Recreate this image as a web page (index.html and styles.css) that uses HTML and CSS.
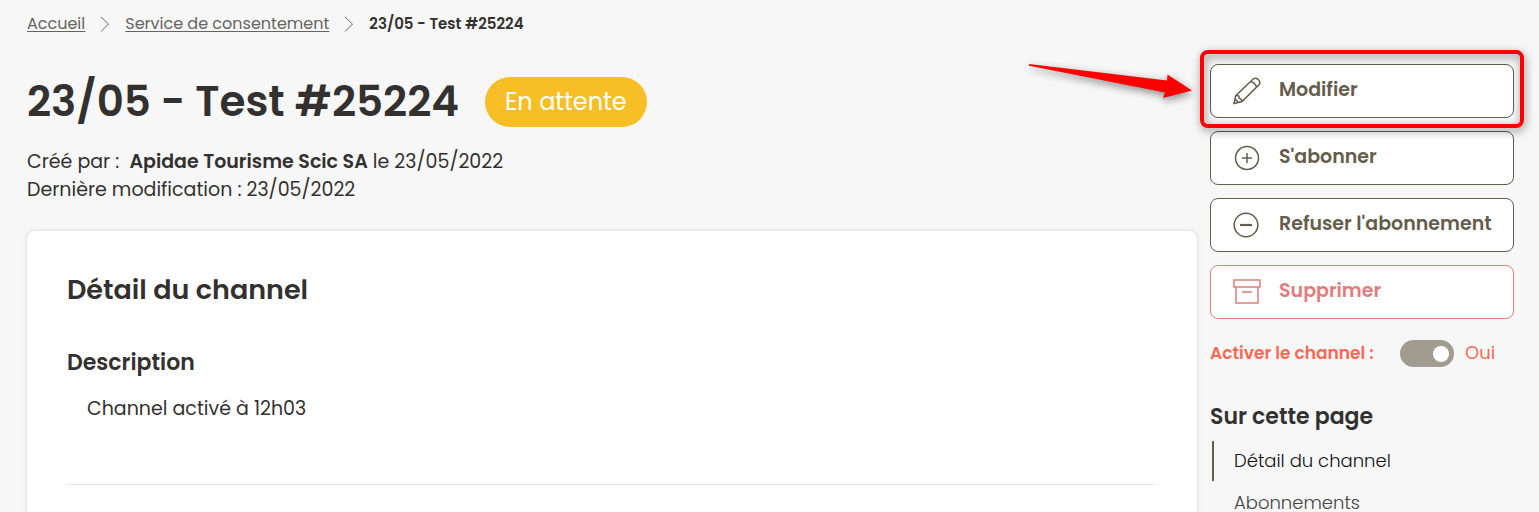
FILE: index.html
```html
<!DOCTYPE html>
<html lang="fr">
<head>
<meta charset="utf-8">
<meta name="viewport" content="width=device-width, initial-scale=1">
<title>23/05 - Test #25224</title>
<link rel="stylesheet" href="styles.css">
</head>
<body>
<div class="page">
  <main class="main">
    <nav class="breadcrumb" aria-label="Fil d'Ariane">
      <a href="#">Accueil</a>
      <svg class="chevron" viewBox="0 0 10 16" aria-hidden="true"><path d="M1 1l7.500 7L1 15.500"/></svg>
      <a href="#">Service de consentement</a>
      <svg class="chevron" viewBox="0 0 10 16" aria-hidden="true"><path d="M1 1l7.500 7L1 15.500"/></svg>
      <span class="current" aria-current="page">23/05 - Test #25224</span>
    </nav>
    <header class="heading">
      <h1 class="title">23/05 - Test #25224</h1>
      <span class="badge">En attente</span>
    </header>
    <div class="meta">
      <p>Créé par :&nbsp; <strong>Apidae Tourisme Scic SA</strong> le 23/05/2022</p>
      <p>Dernière modification : 23/05/2022</p>
    </div>
    <section class="card" id="detail">
      <h2 class="card-title">Détail du channel</h2>
      <h3 class="card-subtitle">Description</h3>
      <p class="description">Channel activé à 12h03</p>
      <hr class="rule">
    </section>
  </main>
  <aside class="side">
    <div class="actions">
      <div class="highlighted">
        <button class="action" type="button">
          <svg class="icon" viewBox="0 0 28 28" aria-hidden="true"><path d="M1 26.500l1.700-7.800L20.200 2q2.200-1.500 4.500 0 3 2.200 1.800 5.300L9 24.500zM2.700 18.700q2.300-.8 3.300.8-.3 2 1.200 2.200 1.800.5 1.800 2.800M17.700 4.500q4.700 1 5.800 5.800M2.300 22.500q1.800.8 2.700 3"/></svg>
          <span>Modifier</span>
        </button>
        <div class="frame"></div>
        <svg class="arrow" viewBox="0 0 180 60" aria-hidden="true"><path d="M9 10L147 26.500 147.500 20.500 172 36.500 143 44 145 38.500 9 11.800z"/></svg>
      </div>
      <button class="action" type="button">
        <svg class="icon" viewBox="0 0 28 28" aria-hidden="true"><circle cx="14" cy="14" r="11.500"/><path d="M14 9v10M9 14h10"/></svg>
        <span>S'abonner</span>
      </button>
      <button class="action" type="button">
        <svg class="icon" viewBox="0 0 28 28" aria-hidden="true"><circle cx="13" cy="14" r="11.800"/><path stroke-width="2.200" d="M7 14h12"/></svg>
        <span>Refuser l'abonnement</span>
      </button>
      <button class="action danger" type="button">
        <svg class="icon" viewBox="0 0 28 28" aria-hidden="true"><path d="M1 2h26v7H1zM3 9v16h22V9M9 14h10"/></svg>
        <span>Supprimer</span>
      </button>
    </div>
    <div class="activate">
      <label class="activate-label" for="enabled">Activer le channel :</label>
      <input class="switch" type="checkbox" role="switch" id="enabled" checked>
      <span>Oui</span>
    </div>
    <nav class="toc" aria-labelledby="toc-title">
      <h2 class="toc-title" id="toc-title">Sur cette page</h2>
      <a class="toc-link active" href="#detail">Détail du channel</a>
      <a class="toc-link" href="#abonnements">Abonnements</a>
    </nav>
  </aside>
</div>
</body>
</html>
```
FILE: styles.css
```css
* { box-sizing: border-box; }
html { height: 100%; }
body {
  margin: 0;
  height: 100%;
  overflow: hidden;
  background: #f7f7f7;
  color: #333130;
  font-family: Poppins, Inter, sans-serif;
  font-size: 18px;
  line-height: 28px;
}
h1, h2, h3, p { margin: 0; }
.page {
  display: grid;
  grid-template-columns: minmax(0, 1fr) 304px;
  column-gap: 13px;
  min-height: 100%;
  padding: 0 25px 0 27px;
}
.main { display: flex; flex-direction: column; }
.breadcrumb {
  display: flex;
  align-items: center;
  gap: 15px;
  padding-top: 12px;
  font-size: 16px;
  line-height: 24px;
}
.breadcrumb a { color: #656462; text-underline-offset: 2px; }
.chevron { width: 10px; height: 16px; fill: none; stroke: #656462; }
.current { font-size: 15px; font-weight: 600; }
.heading { display: flex; align-items: center; gap: 26px; padding-top: 38px; }
.title { font-size: 42px; line-height: 56px; font-weight: 600; }
.badge {
  padding: 5px 20px;
  border-radius: 25px;
  background: #f7be26;
  color: #fff;
  font-size: 24px;
  line-height: 40px;
}
.meta { padding-top: 18px; font-size: 19px; }
.meta strong { font-weight: 600; }
.card {
  flex: 1;
  margin-top: 27px;
  padding: 40px 42px 24px 40px;
  border-radius: 8px 8px 0 0;
  background: #fff;
  box-shadow: 0 0 4px rgba(0, 0, 0, .15);
}
.card-title { font-size: 27px; line-height: 38px; font-weight: 600; }
.card-subtitle { padding-top: 38px; font-size: 22px; line-height: 32px; font-weight: 600; }
.description { padding: 16px 20px 0; font-size: 19px; }
.rule { margin: 61px 0 0; border: 0; border-top: 1px solid #e4e4e4; }
.side { padding-top: 64px; }
.actions { display: flex; flex-direction: column; gap: 13px; }
.highlighted { position: relative; }
.action {
  display: flex;
  align-items: center;
  gap: 18px;
  width: 100%;
  height: 54px;
  padding: 0 12px 0 22px;
  border: 1px solid #655d4c;
  border-radius: 8px;
  background: #fff;
  color: #655d4c;
  font: inherit;
  font-size: 19px;
  font-weight: 600;
  white-space: nowrap;
}
.action span { padding-bottom: 2px; }
.icon { flex: none; width: 28px; height: 28px; fill: none; stroke: currentColor; stroke-width: 1.5; }
.danger { border-color: #e27d7d; color: #e27d7d; }
.frame {
  position: absolute;
  inset: -14px -10px -10px;
  border: 4px solid #f00;
  border-radius: 8px;
  pointer-events: none;
  filter: drop-shadow(1px 3px 4px rgba(0, 0, 0, .5));
}
.arrow {
  position: absolute;
  left: -190px;
  top: -10px;
  width: 180px;
  height: 60px;
  fill: #f00;
  filter: drop-shadow(1px 3px 4px rgba(0, 0, 0, .45));
  pointer-events: none;
}
.activate { display: flex; align-items: center; padding-top: 20px; color: #f96855; }
.activate-label { flex: none; width: 190px; font-size: 17px; font-weight: 600; }
.switch {
  appearance: none;
  display: flex;
  justify-content: flex-end;
  width: 54px;
  height: 27px;
  margin: 0 11px 0 0;
  padding: 6px 5px;
  border-radius: 14px;
  background: #a09c8f;
}
.switch::before { content: ""; width: 16px; height: 16px; border-radius: 50%; background: #fff; }
.switch:not(:checked) { justify-content: flex-start; }
.toc { padding-top: 34px; }
.toc-title { padding-bottom: 8px; font-size: 22px; line-height: 32px; font-weight: 600; }
.toc-link {
  display: block;
  margin: 0 0 2px 2px;
  padding: 6px 20px;
  border-left: 2px solid transparent;
  color: #444;
  font-weight: 300;
  text-decoration: none;
}
.toc-link.active { border-color: #655d4c; color: #111; }
```
